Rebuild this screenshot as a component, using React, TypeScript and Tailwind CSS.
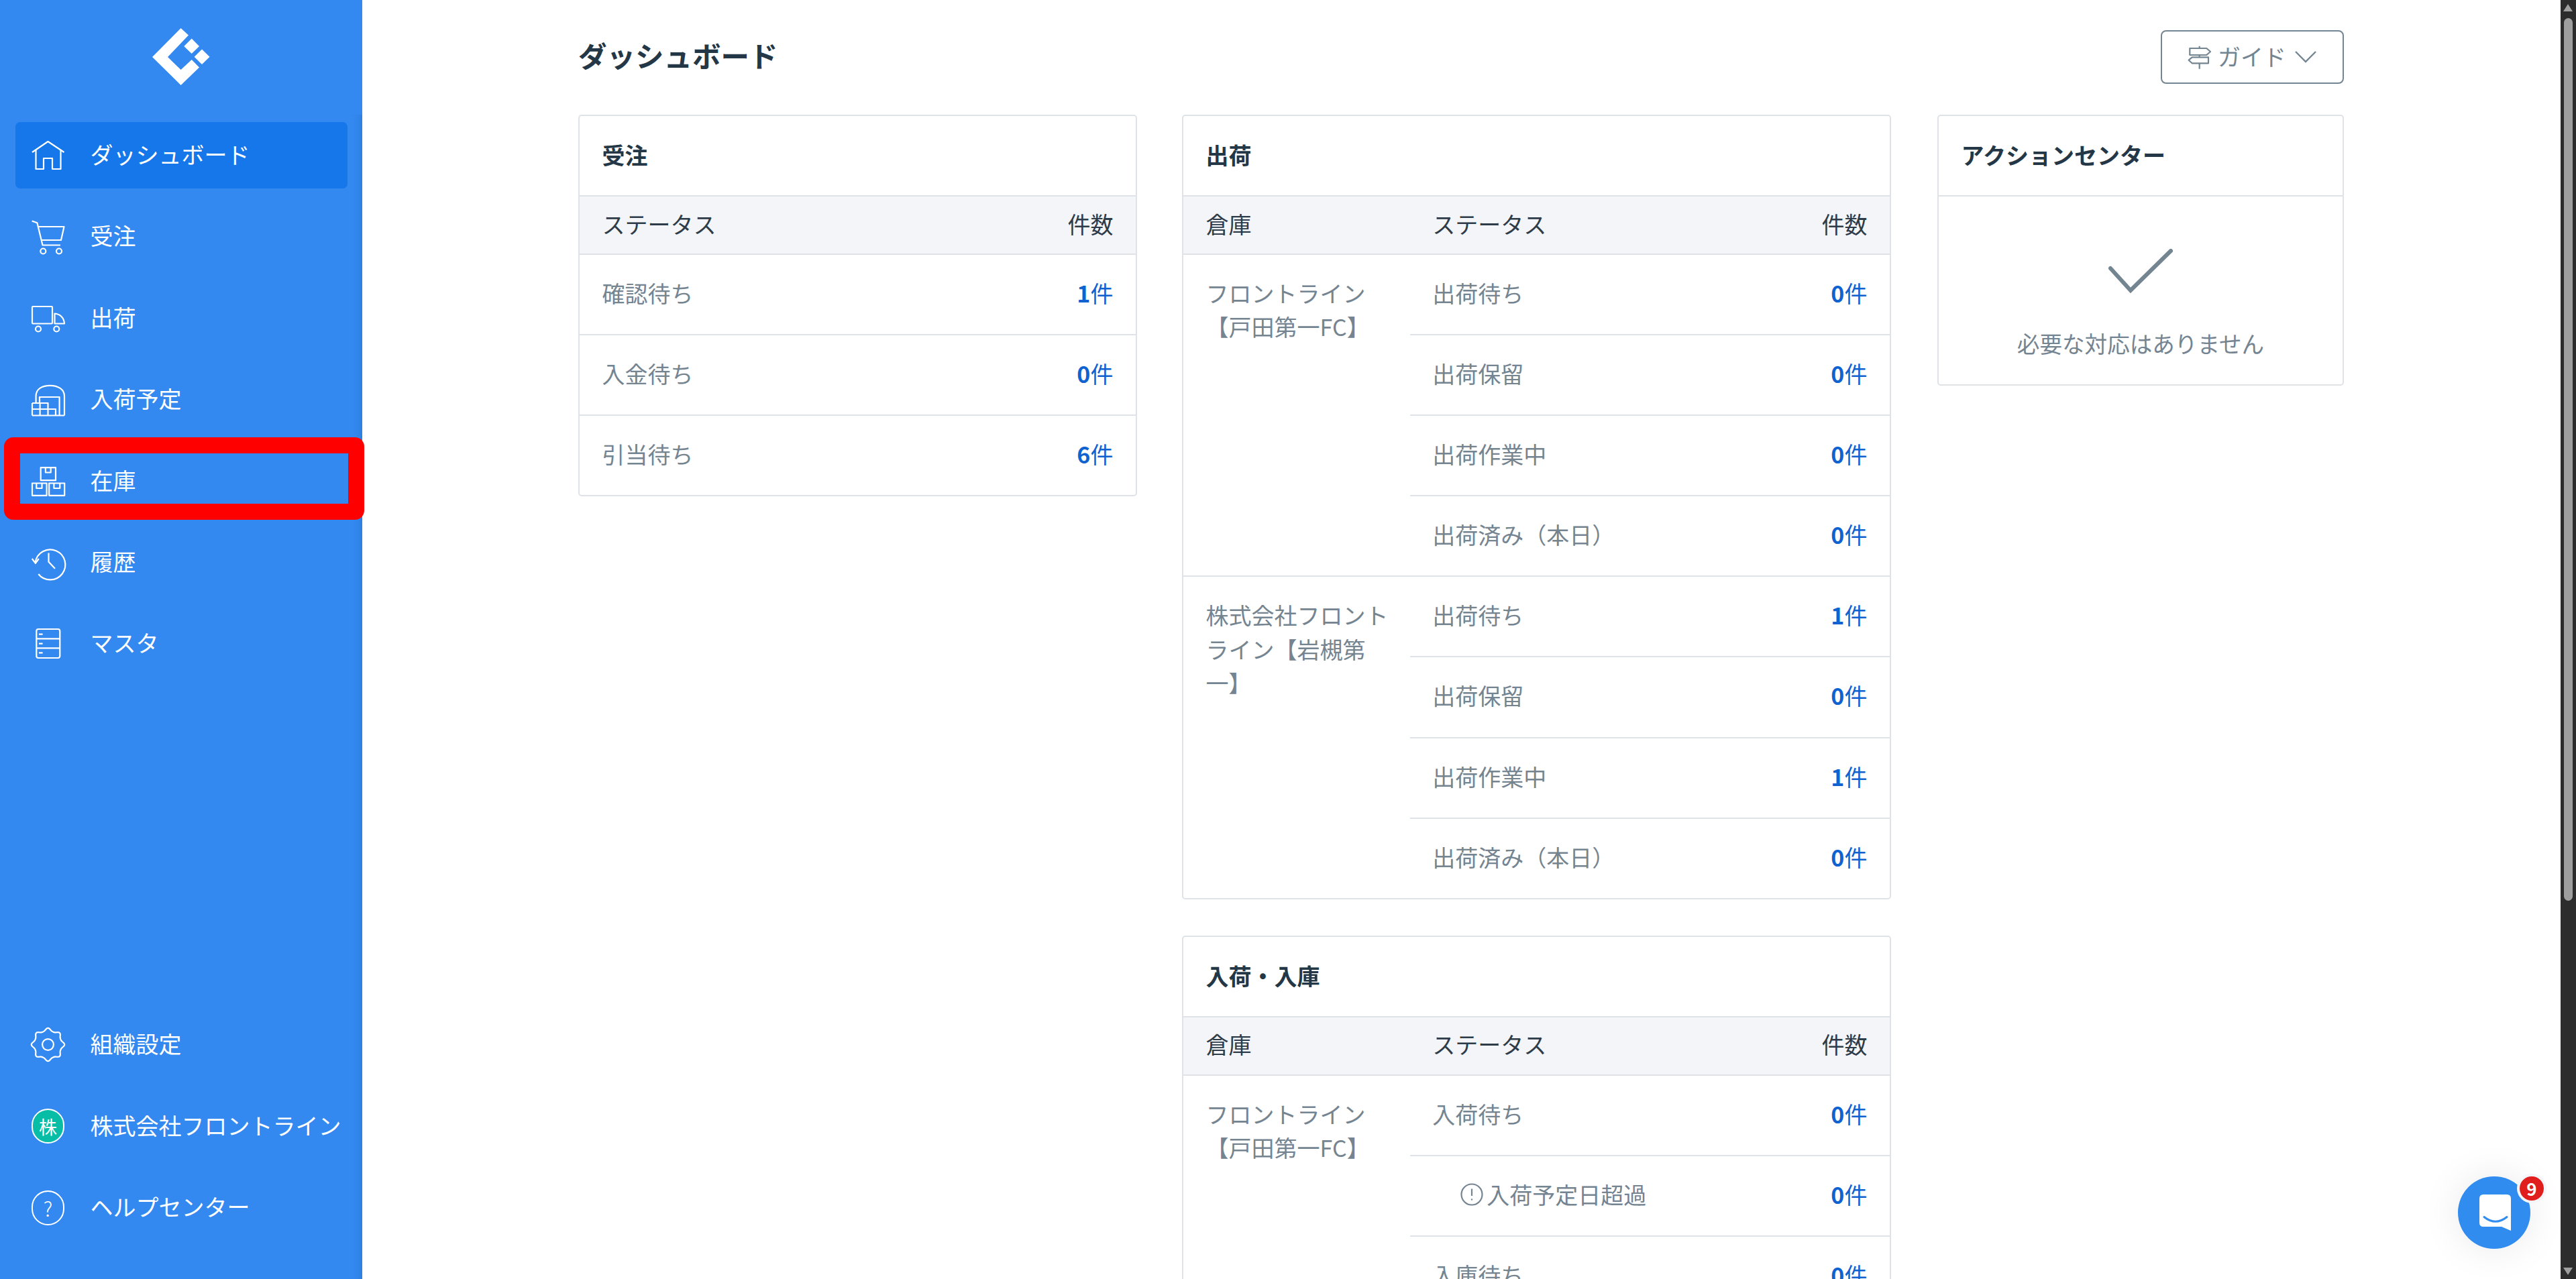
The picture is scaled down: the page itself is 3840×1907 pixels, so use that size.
import React from "react";

const gearPath = (() => {
  const pts: string[] = [];
  const n = 160;
  for (let i = 0; i < n; i++) {
    const t = (i / n) * Math.PI * 2;
    const r = 22.2 + 2.1 * Math.cos(8 * t) + 0.35 * Math.cos(16 * t);
    const x = 24.5 + r * Math.sin(t);
    const y = 24.5 - r * Math.cos(t);
    pts.push(`${i === 0 ? "M" : "L"}${x.toFixed(2)} ${y.toFixed(2)}`);
  }
  return pts.join(" ") + " Z";
})();

const Ico = ({ children }: { children: React.ReactNode }) => (
  <svg
    viewBox="0 0 49 49"
    fill="none"
    stroke="currentColor"
    strokeWidth="2.2"
    strokeLinejoin="round"
    className="h-[49px] w-[49px] shrink-0 overflow-visible text-white"
  >
    {children}
  </svg>
);

const HomeIcon = () => (
  <Ico>
    <path d="M1 20 L24.5 4 L48.5 20" />
    <path d="M6.5 16.5 V45 H18 V29 H31 V45 H43.5 V16.5" />
  </Ico>
);
const CartIcon = () => (
  <Ico>
    <path d="M0.7 1.5 L8.4 4.2 L16.5 37.5 H43" />
    <path d="M10 10 H48.5 L44 30 H14.6" />
    <circle cx="17.3" cy="46.5" r="4" />
    <circle cx="41" cy="46.5" r="4" />
  </Ico>
);
const TruckIcon = () => (
  <Ico>
    <rect x="1" y="7" width="30" height="25.5" rx="1" />
    <path d="M34.5 17.5 C42.5 18 48.5 24 49 32.5 H34.5 Z" />
    <circle cx="10" cy="40.5" r="4" />
    <circle cx="37.3" cy="40.5" r="4" />
  </Ico>
);
const WarehouseIcon = () => (
  <Ico>
    <path d="M6.6 30 V19.5 C6.6 9 16 3.8 27.5 3.8 C39.5 3.8 49 9.5 49 19.5 V48.5" />
    <path d="M12 30 V21 H41.6 V48.5" />
    <path d="M1 48.5 H49" />
    <path d="M1 30 H24.5 V39 H36 V48.5" />
    <path d="M1 30 V48.5 M1 39 H24.5 M12.6 30 V48.5 M24.5 39 V48.5" />
  </Ico>
);
const BoxesIcon = () => (
  <Ico>
    <rect x="13.7" y="4.2" width="22.3" height="19" />
    <path d="M20.9 4.2 V11.5 H28.7 V4.2" />
    <rect x="1" y="27.5" width="21.6" height="18.3" />
    <path d="M7.3 27.5 V35 H15.5 V27.5" />
    <rect x="26.2" y="27.5" width="23" height="18.3" />
    <path d="M33.4 27.5 V35 H42.3 V27.5" />
  </Ico>
);
const HistoryIcon = () => (
  <Ico>
    <path d="M5.6 24.5 A22.5 22.5 0 1 1 10.3 42" />
    <path d="M0.8 19 L5.9 25.8 L10.8 19" />
    <path d="M25.5 10.5 V23.8 L35 33.8" />
  </Ico>
);
const MasterIcon = () => (
  <Ico>
    <rect x="7.3" y="3" width="35" height="43" rx="3" />
    <path d="M7.3 17.3 H42.3 M7.3 31.3 H42.3" />
    <path d="M11 10.7 H16.6 M11 24.7 H16.6 M11 38.3 H16.6" />
  </Ico>
);
const GearIcon = () => (
  <Ico>
    <path d={gearPath} />
    <circle cx="24.5" cy="24.5" r="8.4" />
  </Ico>
);

const Logo = () => (
  <svg viewBox="227 43 86 86" className="-mt-[1px] h-[86px] w-[86px]" fill="#fff">
    <path d="M269.6 43 L281 53.4 L250 86 L269.6 105 L285.7 90 L297 101.6 L269.6 128 L227 86 Z" />
    <path d="M285.7 58.5 L297 70 L285.7 81 L274.3 70 Z" />
    <path d="M301 74.4 L312.5 85.7 L301 97 L289.6 85.7 Z" />
  </svg>
);

const NavItem = ({
  icon,
  label,
  active,
}: {
  icon: React.ReactNode;
  label: string;
  active?: boolean;
}) => (
  <div
    className={`mx-[23px] flex h-[99px] w-[495px] items-center gap-[38.5px] rounded-[7px] pl-[24px] text-[34px] whitespace-nowrap text-white ${
      active ? "bg-[#1677ea]" : ""
    }`}
  >
    {icon}
    <span className="relative -top-[2px]">{label}</span>
  </div>
);

const Count = ({ n }: { n: number }) => (
  <span className="text-[#0f62cf]">
    <span className="font-bold">{n}</span>件
  </span>
);

const CardHeader = ({ title }: { title: string }) => (
  <div className="flex h-[120.4px] items-center border-b-[2.4px] border-[#dfe3e8] pb-[3px] pl-[33.6px] text-[34px] font-bold text-[#243746]">
    {title}
  </div>
);

const Row = ({
  label,
  n,
  alert,
  last,
}: {
  label: string;
  n: number;
  alert?: boolean;
  last?: boolean;
}) => (
  <div
    className={`flex items-start justify-between pt-[32px] pr-[33.6px] pl-[33.6px] text-[34px] leading-[50.4px] ${
      last ? "h-[117.8px]" : "h-[120.2px] border-b-[2.4px] border-[#dfe3e8]"
    }`}
  >
    <span className="flex items-center text-[#758491]">
      {alert && (
        <svg
          viewBox="0 0 34 34"
          className="mr-[5px] ml-[42px] h-[34px] w-[34px]"
          fill="none"
          stroke="#758491"
          strokeWidth="2.2"
        >
          <circle cx="17" cy="17" r="15.5" />
          <path d="M17 8.5 V19" />
          <circle cx="17" cy="24.5" r="1.2" fill="#758491" stroke="none" />
        </svg>
      )}
      {label}
    </span>
    <Count n={n} />
  </div>
);

const Group = ({
  name,
  rows,
  last,
}: {
  name: string;
  rows: { label: string; n: number; alert?: boolean }[];
  last?: boolean;
}) => (
  <div className={`flex ${last ? "" : "border-b-[2.4px] border-[#dfe3e8]"}`}>
    <div className="w-[337.6px] shrink-0 pt-[32px] pr-[29px] pl-[33.6px] text-[34px] leading-[50.4px] text-[#758491]">
      {name}
    </div>
    <div className="flex-1">
      {rows.map((r, i) => (
        <Row key={i} {...r} last={i === rows.length - 1} />
      ))}
    </div>
  </div>
);

const Card = ({ children, className = "" }: { children: React.ReactNode; className?: string }) => (
  <div className={`rounded-[5px] border-[2.4px] border-[#dfe3e8] bg-white ${className}`}>{children}</div>
);

const Head = ({ cols }: { cols: 2 | 3 }) => (
  <div className="flex h-[86.4px] items-center border-b-[2.4px] border-[#dfe3e8] bg-[#f4f5f9] pr-[33.6px] pb-[5px] pl-[33.6px] text-[34px] text-[#2e3c49]">
    {cols === 3 && <span className="w-[337.6px] shrink-0">倉庫</span>}
    <span className="flex-1">ステータス</span>
    <span>件数</span>
  </div>
);

export default function App() {
  return (
    <div className="relative flex h-screen w-full overflow-hidden bg-white font-['Noto_Sans_CJK_JP','Noto_Sans_CJK_SC',sans-serif]">
      {/* sidebar */}
      <aside className="flex h-full w-[540px] shrink-0 flex-col bg-[#3389f0]">
        <div className="flex h-[171px] shrink-0 items-center justify-center">
          <Logo />
        </div>
        <div className="flex flex-1 flex-col justify-between pt-[11px] pb-[57px] shadow-[inset_-12px_0_12px_-9px_rgba(0,0,0,0.1)]">
          <nav className="flex flex-col gap-[22.4px]">
            <NavItem icon={<HomeIcon />} label="ダッシュボード" active />
            <NavItem icon={<CartIcon />} label="受注" />
            <NavItem icon={<TruckIcon />} label="出荷" />
            <NavItem icon={<WarehouseIcon />} label="入荷予定" />
            <NavItem icon={<BoxesIcon />} label="在庫" />
            <NavItem icon={<HistoryIcon />} label="履歴" />
            <NavItem icon={<MasterIcon />} label="マスタ" />
          </nav>
          <div className="flex flex-col gap-[22.4px]">
            <NavItem icon={<GearIcon />} label="組織設定" />
            <NavItem
              icon={
                <span className="flex h-[52px] w-[49px] shrink-0 items-center justify-center rounded-full border-[2.2px] border-white bg-[#08bda6] text-[27px] leading-none text-white">
                  株
                </span>
              }
              label="株式会社フロントライン"
            />
            <NavItem
              icon={
                <span className="flex h-[52px] w-[49px] shrink-0 items-center justify-center rounded-full border-[2.2px] border-white text-[30px] leading-none font-light text-white">
                  ?
                </span>
              }
              label="ヘルプセンター"
            />
          </div>
        </div>
      </aside>

      {/* main */}
      <main className="min-w-0 flex-1 overflow-hidden pt-[45px] pl-[322px]">
        <div className="flex h-[80px] w-[2632px] items-center justify-between">
          <h1 className="relative -top-[3px] text-[42.5px] font-bold text-[#243746]">ダッシュボード</h1>
          <button className="flex h-[80px] w-[273px] items-center rounded-[8px] border-[2.4px] border-[#748592] pl-[38px] text-[34px] text-[#748592]">
            <svg viewBox="0 0 36 37" className="h-[37px] w-[36px]" fill="none" stroke="#748592" strokeWidth="2.2" strokeLinejoin="round">
              <path d="M3.3 5 H28.3 L34 10 L28.3 15 H3.3 Z" />
              <path d="M31 18.3 H6.7 L1.7 22.7 L6.7 27.3 H31 Z" />
              <path d="M17.7 1.7 V5 M17.7 15 V18.3 M17.7 27.3 V35.7" />
            </svg>
            <span className="relative -top-[2px] ml-[9px]">ガイド</span>
            <svg viewBox="0 0 32 18" className="ml-[13px] h-[18px] w-[32px]" fill="none" stroke="#748592" strokeWidth="2.4">
              <path d="M1 1 L16 16 L31 1" />
            </svg>
          </button>
        </div>

        <div className="mt-[46px] flex items-start">
          <Card className="w-[833px]">
            <CardHeader title="受注" />
            <Head cols={2} />
            <Row label="確認待ち" n={1} />
            <Row label="入金待ち" n={0} />
            <Row label="引当待ち" n={6} last />
          </Card>

          <div className="ml-[67px] w-[1057px]">
            <Card>
              <CardHeader title="出荷" />
              <Head cols={3} />
              <Group
                name="フロントライン【戸田第一FC】"
                rows={[
                  { label: "出荷待ち", n: 0 },
                  { label: "出荷保留", n: 0 },
                  { label: "出荷作業中", n: 0 },
                  { label: "出荷済み（本日）", n: 0 },
                ]}
              />
              <Group
                last
                name="株式会社フロントライン【岩槻第一】"
                rows={[
                  { label: "出荷待ち", n: 1 },
                  { label: "出荷保留", n: 0 },
                  { label: "出荷作業中", n: 1 },
                  { label: "出荷済み（本日）", n: 0 },
                ]}
              />
            </Card>
            <Card className="mt-[54.4px]">
              <CardHeader title="入荷・入庫" />
              <Head cols={3} />
              <Group
                name="フロントライン【戸田第一FC】"
                rows={[
                  { label: "入荷待ち", n: 0 },
                  { label: "入荷予定日超過", n: 0, alert: true },
                  { label: "入庫待ち", n: 0 },
                ]}
              />
            </Card>
          </div>

          <Card className="ml-[69px] w-[606px]">
            <CardHeader title="アクションセンター" />
            <div className="flex flex-col items-center pt-[78px] pb-[35px]">
              <svg viewBox="0 0 96 66" className="h-[66px] w-[96px]" fill="none" stroke="#748592" strokeWidth="6" strokeLinecap="round">
                <path d="M3 29 L33 62 L93 3" />
              </svg>
              <p className="mt-[50px] text-[33.6px] leading-[50.4px] text-[#758491]">必要な対応はありません</p>
            </div>
          </Card>
        </div>
      </main>

      {/* window scrollbar */}
      <div className="relative h-full w-[23px] shrink-0 bg-[#2c2c2c]">
        <div className="absolute top-[6px] left-[4px] h-0 w-0 border-x-[7.5px] border-b-[11px] border-x-transparent border-b-[#9f9f9f]" />
        <div className="absolute top-[27px] left-[5px] h-[1316px] w-[13px] rounded-full bg-[#9f9f9f]" />
        <div className="absolute bottom-[6px] left-[4px] h-0 w-0 border-x-[7.5px] border-t-[11px] border-x-transparent border-t-[#9f9f9f]" />
      </div>

      {/* annotation around 在庫 */}
      <div className="pointer-events-none absolute top-[652px] left-[6px] h-[123px] w-[537px] rounded-[14px] border-[24px] border-[#ff0000]" />

      {/* chat launcher */}
      <div className="absolute right-[68px] bottom-[45px] flex h-[108px] w-[108px] items-center justify-center rounded-full bg-[#318cf0] shadow-[0_0_60px_rgba(0,0,0,0.09)]">
        <svg viewBox="0 0 48 54" className="ml-[4px] h-[54px] w-[48px]">
          <path d="M6 0 H41 Q47 0 47 6 V54 L33 48 H6 Q0 48 0 42 V6 Q0 0 6 0 Z" fill="#fff" />
          <path d="M7 33.5 Q24 47 41 33.5" fill="none" stroke="#318cf0" strokeWidth="3" strokeLinecap="round" />
        </svg>
        <span className="absolute top-[-4px] left-[88px] flex h-[44px] w-[44px] items-center justify-center rounded-full border-[4px] border-[#f3f5f8] bg-[#e01e1e] text-[26px] leading-none font-bold text-white">
          9
        </span>
      </div>
    </div>
  );
}
